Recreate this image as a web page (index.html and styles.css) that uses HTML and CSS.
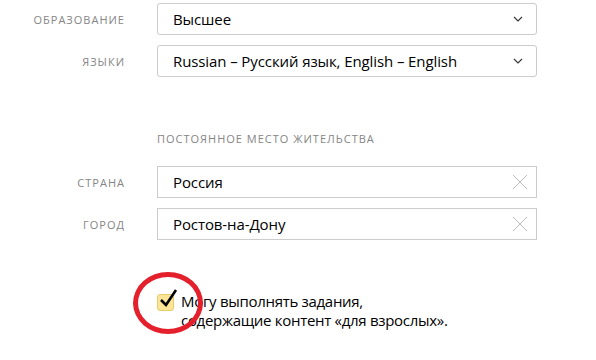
FILE: index.html
```html
<!DOCTYPE html>
<html lang="ru">
<head>
    <meta charset="UTF-8">
    <title>Анкета</title>
    <link rel="stylesheet" href="styles.css">
</head>
<body>
    <div class="form">
        <!-- Education and languages -->
        <div class="row">
            <div class="label">Образование</div>
            <div class="field select">
                <span class="value">Высшее</span>
                <svg class="chevron" width="10" height="6" viewBox="0 0 10 6"><path d="M1 1l4 4 4-4" fill="none" stroke="#333" stroke-width="1.1"/></svg>
            </div>
        </div>
        <div class="row">
            <div class="label">Языки</div>
            <div class="field select">
                <span class="value">Russian – Русский язык, English – English</span>
                <svg class="chevron" width="10" height="6" viewBox="0 0 10 6"><path d="M1 1l4 4 4-4" fill="none" stroke="#333" stroke-width="1.1"/></svg>
            </div>
        </div>

        <!-- Residence -->
        <div class="section-title">Постоянное место жительства</div>
        <div class="row">
            <div class="label">Страна</div>
            <div class="field input">
                <span class="value">Россия</span>
                <svg class="clear" width="16" height="16" viewBox="0 0 16 16"><path d="M1 1l14 14M15 1L1 15" stroke="#bbb" stroke-width="1"/></svg>
            </div>
        </div>
        <div class="row">
            <div class="label">Город</div>
            <div class="field input">
                <span class="value">Ростов-на-Дону</span>
                <svg class="clear" width="16" height="16" viewBox="0 0 16 16"><path d="M1 1l14 14M15 1L1 15" stroke="#bbb" stroke-width="1"/></svg>
            </div>
        </div>

        <!-- Adult content checkbox -->
        <div class="check-row">
            <div class="checkbox">
                <svg class="tick" width="22" height="24" viewBox="0 0 22 24"><path d="M3 13l5 5L18 3" fill="none" stroke="#000" stroke-width="2.6"/></svg>
            </div>
            <div class="check-text">Могу выполнять задания,<br>содержащие контент «для взрослых».</div>
            <div class="circle"></div>
        </div>
    </div>
</body>
</html>
```

FILE: styles.css
```css
/* General styles */
body {
    margin: 0;
    background: #fff;
    font-family: "Open Sans", "Noto Sans", sans-serif;
    color: #000;
}

.form {
    padding: 3px 0 40px;
}

.row {
    display: flex;
    align-items: center;
    margin-bottom: 10px;
}

.label {
    width: 125px;
    padding-right: 32px;
    text-align: right;
    font-size: 11px;
    letter-spacing: 1px;
    text-transform: uppercase;
    color: #858585;
}

.field {
    width: 380px;
    height: 32px;
    box-sizing: border-box;
    border: 1px solid #ccc;
    display: flex;
    align-items: center;
    padding: 0 8px 0 15px;
    font-size: 15px;
    letter-spacing: -0.1px;
}

.select {
    border-radius: 3px;
}

.value {
    flex-grow: 1;
}

.chevron {
    margin-right: 5px;
}

.section-title {
    margin: 54px 0 19px 157px;
    height: 16px;
    line-height: 16px;
    font-size: 11px;
    letter-spacing: 1px;
    text-transform: uppercase;
    color: #858585;
}

/* Checkbox */
.check-row {
    position: relative;
    display: flex;
    align-items: flex-start;
    margin: 52px 0 0 157px;
}

.checkbox {
    position: relative;
    width: 17px;
    height: 17px;
    box-sizing: border-box;
    margin-top: 2px;
    background: #fde598;
    border: 1px solid #e8cc6a;
    border-radius: 3px;
}

.tick {
    position: absolute;
    left: 0;
    top: -8px;
}

.check-text {
    margin-left: 7px;
    font-size: 15px;
    line-height: 19px;
    letter-spacing: -0.3px;
}

/* Red annotation ring */
.circle {
    position: absolute;
    left: -24px;
    top: -20px;
    width: 60px;
    height: 52px;
    border: 5px solid #e3202c;
    border-radius: 50%;
}
```
